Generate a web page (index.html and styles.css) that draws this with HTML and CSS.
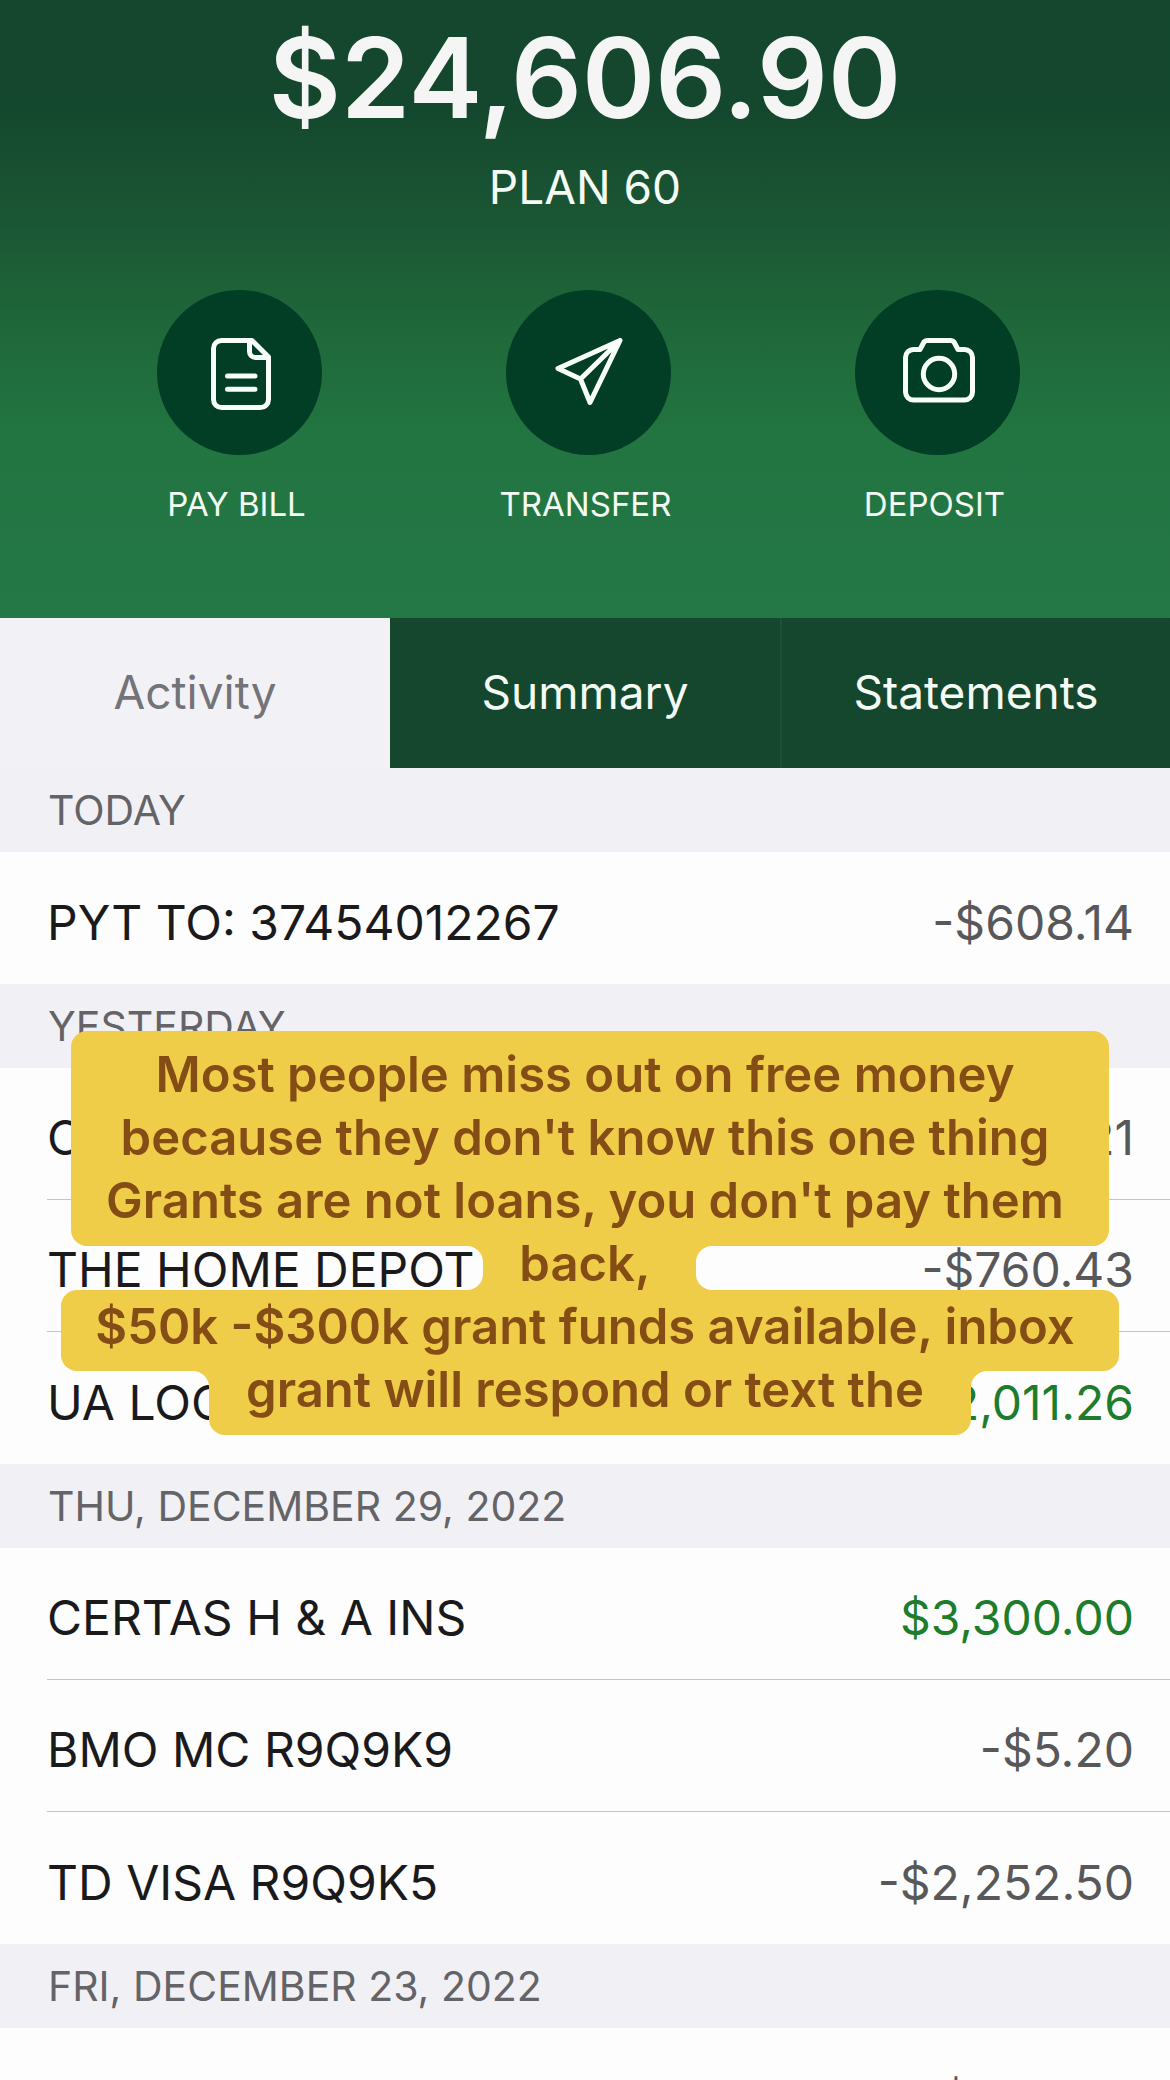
FILE: index.html
```html
<!DOCTYPE html>
<html lang="en">
<head>
<meta charset="utf-8">
<meta name="viewport" content="width=device-width, initial-scale=1">
<title>Account activity</title>
<link rel="stylesheet" href="styles.css">
</head>
<body>
<main class="app">
  <header class="hero">
    <h1 class="balance">$24,606.90</h1>
    <p class="plan">PLAN 60</p>
    <div class="actions">
      <button class="action" type="button">
        <svg class="action-icon" viewBox="0 0 165 165" aria-hidden="true">
          <circle class="disc" cx="82.5" cy="82.5" r="82.5"/>
          <path d="M95 50.5H64.500a8 8 0 0 0-8 8v51a8 8 0 0 0 8 8h39a8 8 0 0 0 8-8V67Z"/>
          <path d="M92.500 51v10.500a6 6 0 0 0 6 6h12.500M70.500 86h27.500M70.500 99.300h27.500"/>
        </svg>
        <span class="action-label">PAY BILL</span>
      </button>
      <button class="action" type="button">
        <svg class="action-icon" viewBox="0 0 165 165" aria-hidden="true">
          <circle class="disc" cx="82.5" cy="82.5" r="82.5"/>
          <path d="M114 50.500 52 78.500l22.500 10.500L84 112.500ZM114 50.500 74.500 89"/>
        </svg>
        <span class="action-label">TRANSFER</span>
      </button>
      <button class="action" type="button">
        <svg class="action-icon" viewBox="0 0 165 165" aria-hidden="true">
          <circle class="disc" cx="82.5" cy="82.5" r="82.5"/>
          <path d="M65 59.500l4-7.500q1-1.500 3-1.500h24q2 0 3 1.500l4 7.500h6.500a8 8 0 0 1 8 8v34.500a8 8 0 0 1-8 8h-51a8 8 0 0 1-8-8V67.500a8 8 0 0 1 8-8Z"/>
          <circle cx="84" cy="84" r="15.700"/>
        </svg>
        <span class="action-label">DEPOSIT</span>
      </button>
    </div>
  </header>

  <nav class="tabs">
    <button class="tab active" type="button">Activity</button>
    <button class="tab" type="button">Summary</button>
    <button class="tab" type="button">Statements</button>
  </nav>

  <div class="feed">
    <section>
      <h2 class="day">TODAY</h2>
      <ul class="rows">
        <li class="row"><span>PYT TO: 37454012267</span><span class="amount">-$608.14</span></li>
      </ul>
    </section>
    <section class="noted">
      <h2 class="day">YESTERDAY</h2>
      <ul class="rows">
        <li class="row"><span>C</span><span class="amount">.21</span></li>
        <li class="row"><span>THE HOME DEPOT</span><span class="amount">-$760.43</span></li>
        <li class="row"><span>UA LOC</span><span class="amount credit">$2,011.26</span></li>
      </ul>
      <aside class="note">
        <svg class="note-shape" viewBox="0 0 1058 404" preserveAspectRatio="none" aria-hidden="true">
          <path d="M26 0H1032a16 16 0 0 1 16 16V199a16 16 0 0 1-16 16H651a16 16 0 0 0-16 16V243a16 16 0 0 0 16 16H1042a16 16 0 0 1 16 16V324a16 16 0 0 1-16 16H926a16 16 0 0 0-16 16V388a16 16 0 0 1-16 16H164a16 16 0 0 1-16-16V356a16 16 0 0 0-16-16H16a16 16 0 0 1-16-16V275a16 16 0 0 1 16-16H406a16 16 0 0 0 16-16V231a16 16 0 0 0-16-16H26a16 16 0 0 1-16-16V16a16 16 0 0 1 16-16Z"/>
        </svg>
        <p class="note-text">Most people miss out on free money<br>because they don't know this one thing<br>Grants are not loans, you don't pay them<br>back,<br>$50k -$300k grant funds available, inbox<br>grant will respond or text the</p>
      </aside>
    </section>
    <section>
      <h2 class="day">THU, DECEMBER 29, 2022</h2>
      <ul class="rows">
        <li class="row"><span>CERTAS H &amp; A INS</span><span class="amount credit">$3,300.00</span></li>
        <li class="row"><span>BMO MC R9Q9K9</span><span class="amount">-$5.20</span></li>
        <li class="row"><span>TD VISA R9Q9K5</span><span class="amount">-$2,252.50</span></li>
      </ul>
    </section>
    <section>
      <h2 class="day">FRI, DECEMBER 23, 2022</h2>
      <ul class="rows">
        <li class="row"><span>UNIVERSAL GAS CONTIN</span><span class="amount">-$406.00</span></li>
      </ul>
    </section>
  </div>
</main>
</body>
</html>
```
FILE: styles.css
```css
* {
  box-sizing: border-box;
}

body,
h1,
h2,
p,
ul {
  margin: 0;
  padding: 0;
  font-weight: 400;
}

body {
  font-family: Inter, "Liberation Sans", sans-serif;
  background: #fdfdfd;
  color: #1a1a1c;
}

button {
  border: 0;
  padding: 0;
  background: none;
  font: inherit;
  color: inherit;
  cursor: pointer;
}

.app {
  display: flex;
  flex-direction: column;
  height: 100vh;
}

.hero {
  display: flex;
  flex-direction: column;
  flex: none;
  padding: 12px 0 94px;
  background: linear-gradient(#14472e 0, #14482e 110px, #1b5634 220px, #1f683a 330px, #227541 440px, #247846 100%);
  color: #f4fbf4;
  text-align: center;
}

.balance {
  font-size: 111px;
  line-height: 132px;
  font-weight: 600;
  color: #f5f5f5;
}

.plan {
  margin-top: 15px;
  font-size: 46px;
  line-height: 56px;
}

.actions {
  display: grid;
  grid-template-columns: repeat(3, 1fr);
  margin-top: 75px;
  padding: 0 58px 0 65px;
}

.action {
  display: flex;
  flex-direction: column;
  align-items: center;
  gap: 29px;
}

.action-icon {
  width: 165px;
  height: 165px;
  fill: none;
  stroke: #f8fffa;
  stroke-width: 5;
  stroke-linecap: round;
  stroke-linejoin: round;
}

.disc {
  fill: #023d26;
  stroke: none;
}

.action-label {
  padding-right: 6px;
  font-size: 33px;
  line-height: 40px;
}

.tabs {
  display: grid;
  grid-template-columns: repeat(3, 1fr);
  flex: none;
  height: 150px;
  background: #14472e;
}

.tab {
  padding-bottom: 2px;
  font-size: 46px;
  color: #f4fbf4;
}

.tab + .tab + .tab {
  border-left: 2px solid #1d5137;
}

.tab.active {
  background: #f2f2f6;
  color: #747478;
}

.feed {
  flex: 1;
  min-height: 0;
  overflow-y: auto;
  scrollbar-width: none;
}

.day {
  padding: 18px 48px;
  background: #f1f1f5;
  font-size: 41px;
  line-height: 48px;
  color: #646468;
}

.rows {
  list-style: none;
}

.row {
  display: flex;
  justify-content: space-between;
  align-items: center;
  height: 132px;
  margin-left: 47px;
  padding: 8px 36px 0 0;
  font-size: 48px;
  white-space: nowrap;
}

.row:not(:last-child) {
  border-bottom: 1px solid #c4c4c8;
}

.amount {
  color: #58585a;
}

.amount.credit {
  color: #1e7d2c;
}

.noted {
  position: relative;
}

.note {
  position: absolute;
  top: 47px;
  left: 61px;
  right: 51px;
  height: 404px;
}

.note-shape {
  display: block;
  width: 100%;
  height: 100%;
  fill: #efcd49;
}

.note-text {
  position: absolute;
  inset: 12px 10px 0 0;
  font-size: 49px;
  line-height: 63px;
  font-weight: 600;
  color: #854d16;
  text-align: center;
  white-space: nowrap;
}
```
